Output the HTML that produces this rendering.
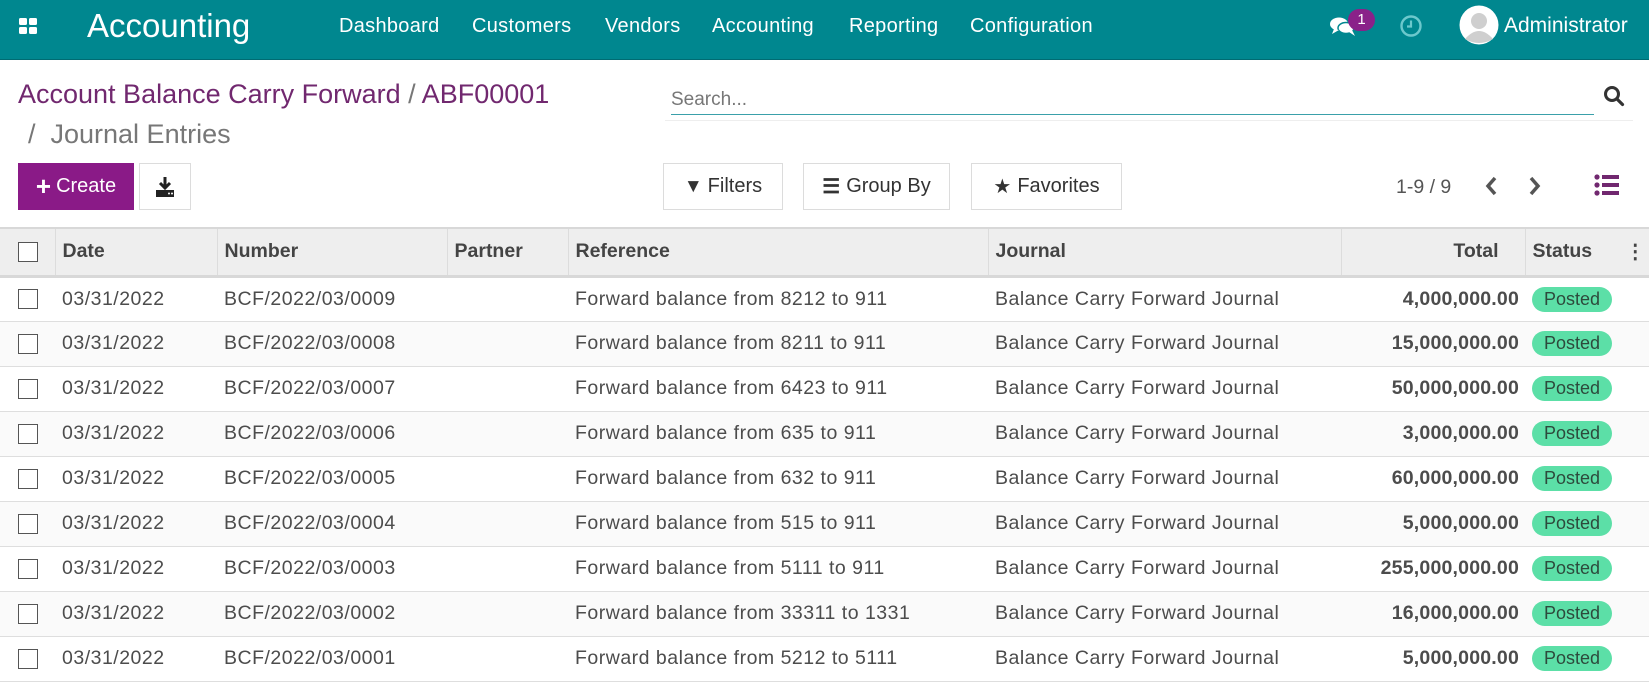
<!DOCTYPE html>
<html><head><meta charset="utf-8"><style>
*{box-sizing:border-box;margin:0;padding:0}
body{width:1649px;height:683px;overflow:hidden;background:#fff;font-family:"Liberation Sans",sans-serif;color:#4c4c4c;position:relative}
.abs{position:absolute;white-space:nowrap}
.nav{position:absolute;left:0;top:0;width:1649px;height:60px;background:#00878f;border-bottom:1px solid #006b72}
.nav .m{position:absolute;top:15px;color:#fff;font-size:20px;letter-spacing:0.3px}
table{position:absolute;left:0;top:227px;width:1649px;border-collapse:collapse;font-size:19.5px;letter-spacing:0.5px;table-layout:fixed}
th{height:48px;background:#eeeeee;text-align:left;font-weight:bold;color:#444;border-right:1px solid #dcdcdc;border-top:2px solid #d8d8d8;border-bottom:3px solid #d8d8d8;padding-left:7px;letter-spacing:0}
td{height:45px;border-bottom:1px solid #dedede;padding-left:7px;color:#4c4c4c;white-space:nowrap;overflow:visible}
tr.r:nth-child(odd) td{background:#fafafa}
.cb{display:inline-block;width:20px;height:20px;border:1px solid #555;background:#fff;vertical-align:middle}
.tot{text-align:right;font-weight:bold;padding-right:6px;padding-left:0;letter-spacing:0.2px}
.badge{display:inline-block;background:#5cdfa7;color:#2d4a3c;border-radius:13px;padding:2px 12px;font-size:18px;letter-spacing:0}
.btn{position:absolute;top:163px;height:47px;border:1px solid #dcdcdc;background:#fff;font-size:19px;color:#333;display:flex;align-items:center;justify-content:center}
</style></head><body>
<div class="nav">
 <svg class="abs" style="left:19px;top:18px" width="20" height="18" viewBox="0 0 20 18"><rect x="0" y="0" width="8" height="7" rx="1.5" fill="#fff"/><rect x="10" y="0" width="8" height="7" rx="1.5" fill="#fff"/><rect x="0" y="9" width="8" height="7" rx="1.5" fill="#fff"/><rect x="10" y="9" width="8" height="7" rx="1.5" fill="#fff"/></svg>
 <div class="abs" style="left:87px;top:7px;color:#fff;font-size:33px">Accounting</div>
 <div class="m" style="left:339px">Dashboard</div>
 <div class="m" style="left:472px">Customers</div>
 <div class="m" style="left:605px">Vendors</div>
 <div class="m" style="left:712px">Accounting</div>
 <div class="m" style="left:849px">Reporting</div>
 <div class="m" style="left:970px">Configuration</div>
 <svg class="abs" style="left:1329px;top:15px" width="30" height="22" viewBox="0 0 30 22"><ellipse cx="10" cy="9" rx="9" ry="6.5" fill="#fff"/><ellipse cx="17" cy="13" rx="8" ry="5.5" fill="#fff" stroke="#00878f" stroke-width="1.5"/><path d="M5 14 L3 19 L10 15Z" fill="#fff"/><path d="M20 17 L26 21 L23 15Z" fill="#fff"/></svg>
 <div class="abs" style="left:1348px;top:9px;width:27px;height:22px;border-radius:11px;background:#8a2189;color:#fff;font-size:15px;text-align:center;line-height:22px">1</div>
 <svg class="abs" style="left:1399px;top:14px" width="24" height="24" viewBox="0 0 24 24"><circle cx="12" cy="12" r="9.5" fill="none" stroke="#6cc8cc" stroke-width="2.4"/><path d="M12 6.5V12.5H8" fill="none" stroke="#6cc8cc" stroke-width="2.2"/></svg>
 <svg class="abs" style="left:1459px;top:5px" width="40" height="40" viewBox="0 0 40 40"><circle cx="20" cy="20" r="19.5" fill="#fff"/><circle cx="20" cy="16" r="8" fill="#cfcfcf"/><path d="M6 34 Q20 18 34 34 Q20 42 6 34Z" fill="#cfcfcf"/></svg>
 <div class="abs" style="left:1504px;top:14px;color:#fff;font-size:21px">Administrator</div>
</div>
<div class="abs" style="left:18px;top:79px;font-size:27px;color:#71286f">Account Balance Carry Forward <span style="color:#777">/</span> ABF00001</div>
<div class="abs" style="left:28px;top:119px;font-size:27px;color:#777">/ &nbsp;Journal Entries</div>
<div class="abs" style="left:671px;top:89px;font-size:19px;color:#777">Search...</div>
<div class="abs" style="left:671px;top:114px;width:923px;height:1px;background:#3aa0aa"></div>
<div class="abs" style="left:665px;top:120px;width:968px;height:1px;background:#eee"></div>
<svg class="abs" style="left:1603px;top:85px" width="22" height="22" viewBox="0 0 22 22"><circle cx="9" cy="9" r="6.5" fill="none" stroke="#333" stroke-width="3"/><path d="M14 14L19.5 19.5" stroke="#333" stroke-width="3.2" stroke-linecap="round"/></svg>
<div class="btn" style="left:18px;width:116px;background:#8a1a87;border-color:#8a1a87;color:#fff;font-size:20px"><b style="font-size:26px;margin-right:5px">+</b>Create</div>
<div class="btn" style="left:139px;width:52px"><svg width="20" height="22" viewBox="0 0 20 22"><path d="M10 1V11M5 7L10 12L15 7" stroke="#222" stroke-width="3" fill="none"/><rect x="1" y="14" width="18" height="7" fill="#222"/><circle cx="14" cy="17.5" r="1" fill="#fff"/><circle cx="17" cy="17.5" r="1" fill="#fff"/></svg></div>
<div class="btn" style="left:663px;width:120px;font-size:20px"><span style="font-size:19px;margin-right:5px">▼</span>Filters</div>
<div class="btn" style="left:803px;width:147px;font-size:20px"><span style="font-weight:bold;margin-right:6px">☰</span>Group By</div>
<div class="btn" style="left:971px;width:151px;font-size:20px"><span style="margin-right:6px">★</span>Favorites</div>
<div class="abs" style="left:1396px;top:176px;font-size:19.5px;color:#555">1-9 / 9</div>
<svg class="abs" style="left:1484px;top:175px" width="14" height="22" viewBox="0 0 14 22"><path d="M11 3L4 11L11 19" stroke="#555" stroke-width="3.5" fill="none"/></svg>
<svg class="abs" style="left:1528px;top:175px" width="14" height="22" viewBox="0 0 14 22"><path d="M3 3L10 11L3 19" stroke="#555" stroke-width="3.5" fill="none"/></svg>
<svg class="abs" style="left:1594px;top:174px" width="26" height="22" viewBox="0 0 26 22"><g fill="#71286f"><circle cx="3" cy="3" r="2.6"/><circle cx="3" cy="11" r="2.6"/><circle cx="3" cy="19" r="2.6"/><rect x="8" y="1" width="17" height="4"/><rect x="8" y="9" width="17" height="4"/><rect x="8" y="17" width="17" height="4"/></g></svg>
<table>
<colgroup><col style="width:55px"><col style="width:162px"><col style="width:230px"><col style="width:121px"><col style="width:420px"><col style="width:353px"><col style="width:184px"><col style="width:90px"><col></colgroup>
<tr><th style="padding-left:18px"><span class="cb"></span></th><th>Date</th><th>Number</th><th>Partner</th><th>Reference</th><th>Journal</th><th style="text-align:right;padding-right:26px">Total</th><th style="border-right:none">Status</th><th style="border-right:none;text-align:right;padding-right:4px">⋮</th></tr>
<tr class="r"><td style="padding-left:18px"><span class="cb"></span></td><td>03/31/2022</td><td>BCF/2022/03/0009</td><td></td><td>Forward balance from 8212 to 911</td><td>Balance Carry Forward Journal</td><td class="tot">4,000,000.00</td><td><span class="badge">Posted</span></td><td></td></tr>
<tr class="r"><td style="padding-left:18px"><span class="cb"></span></td><td>03/31/2022</td><td>BCF/2022/03/0008</td><td></td><td>Forward balance from 8211 to 911</td><td>Balance Carry Forward Journal</td><td class="tot">15,000,000.00</td><td><span class="badge">Posted</span></td><td></td></tr>
<tr class="r"><td style="padding-left:18px"><span class="cb"></span></td><td>03/31/2022</td><td>BCF/2022/03/0007</td><td></td><td>Forward balance from 6423 to 911</td><td>Balance Carry Forward Journal</td><td class="tot">50,000,000.00</td><td><span class="badge">Posted</span></td><td></td></tr>
<tr class="r"><td style="padding-left:18px"><span class="cb"></span></td><td>03/31/2022</td><td>BCF/2022/03/0006</td><td></td><td>Forward balance from 635 to 911</td><td>Balance Carry Forward Journal</td><td class="tot">3,000,000.00</td><td><span class="badge">Posted</span></td><td></td></tr>
<tr class="r"><td style="padding-left:18px"><span class="cb"></span></td><td>03/31/2022</td><td>BCF/2022/03/0005</td><td></td><td>Forward balance from 632 to 911</td><td>Balance Carry Forward Journal</td><td class="tot">60,000,000.00</td><td><span class="badge">Posted</span></td><td></td></tr>
<tr class="r"><td style="padding-left:18px"><span class="cb"></span></td><td>03/31/2022</td><td>BCF/2022/03/0004</td><td></td><td>Forward balance from 515 to 911</td><td>Balance Carry Forward Journal</td><td class="tot">5,000,000.00</td><td><span class="badge">Posted</span></td><td></td></tr>
<tr class="r"><td style="padding-left:18px"><span class="cb"></span></td><td>03/31/2022</td><td>BCF/2022/03/0003</td><td></td><td>Forward balance from 5111 to 911</td><td>Balance Carry Forward Journal</td><td class="tot">255,000,000.00</td><td><span class="badge">Posted</span></td><td></td></tr>
<tr class="r"><td style="padding-left:18px"><span class="cb"></span></td><td>03/31/2022</td><td>BCF/2022/03/0002</td><td></td><td>Forward balance from 33311 to 1331</td><td>Balance Carry Forward Journal</td><td class="tot">16,000,000.00</td><td><span class="badge">Posted</span></td><td></td></tr>
<tr class="r"><td style="padding-left:18px"><span class="cb"></span></td><td>03/31/2022</td><td>BCF/2022/03/0001</td><td></td><td>Forward balance from 5212 to 5111</td><td>Balance Carry Forward Journal</td><td class="tot">5,000,000.00</td><td><span class="badge">Posted</span></td><td></td></tr>
</table>
</body></html>
